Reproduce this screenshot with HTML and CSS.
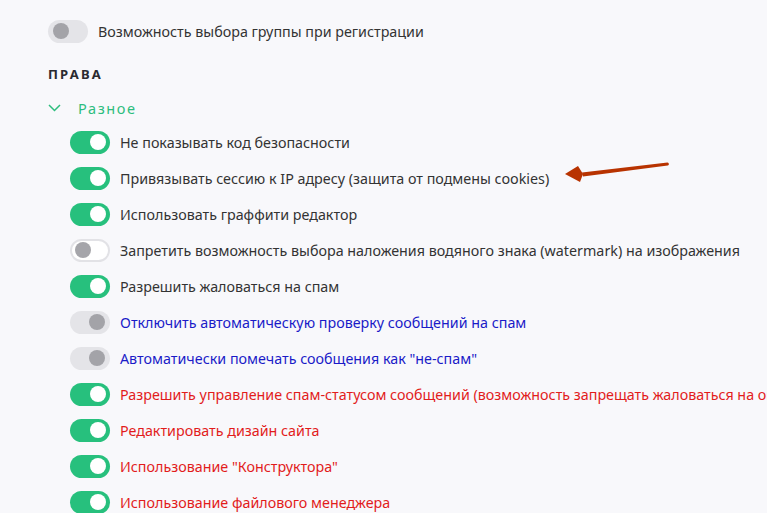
FILE: index.html
```html
<!DOCTYPE html>
<html lang="ru">
<head>
<meta charset="utf-8">
<link rel="stylesheet" href="styles.css">
</head>
<body>
<div class="page">
  <div class="row top">
    <span class="tg disabled-off"><i></i></span>
    <span class="lbl">Возможность выбора группы при регистрации</span>
  </div>
  <div class="section-title">ПРАВА</div>
  <div class="group-head">
    <svg class="chev" width="13" height="8" viewBox="0 0 13 8"><path d="M1 1 L6.5 6.5 L12 1" fill="none" stroke="#2dbd7e" stroke-width="1.5"/></svg>
    <span>Разное</span>
  </div>
  <div class="list">
    <div class="row"><span class="tg on"><i></i></span><span class="lbl">Не показывать код безопасности</span></div>
    <div class="row"><span class="tg on"><i></i></span><span class="lbl">Привязывать сессию к IP адресу (защита от подмены cookies)</span></div>
    <div class="row"><span class="tg on"><i></i></span><span class="lbl">Использовать граффити редактор</span></div>
    <div class="row"><span class="tg off"><i></i></span><span class="lbl">Запретить возможность выбора наложения водяного знака (watermark) на изображения</span></div>
    <div class="row"><span class="tg on"><i></i></span><span class="lbl">Разрешить жаловаться на спам</span></div>
    <div class="row"><span class="tg disabled-on"><i></i></span><span class="lbl blue">Отключить автоматическую проверку сообщений на спам</span></div>
    <div class="row"><span class="tg disabled-on"><i></i></span><span class="lbl blue">Автоматически помечать сообщения как "не-спам"</span></div>
    <div class="row"><span class="tg on"><i></i></span><span class="lbl red">Разрешить управление спам-статусом сообщений (возможность запрещать жаловаться на оп</span></div>
    <div class="row"><span class="tg on"><i></i></span><span class="lbl red">Редактировать дизайн сайта</span></div>
    <div class="row"><span class="tg on"><i></i></span><span class="lbl red">Использование "Конструктора"</span></div>
    <div class="row"><span class="tg on"><i></i></span><span class="lbl red">Использование файлового менеджера</span></div>
  </div>
  <svg class="arrow" width="120" height="30" viewBox="0 0 120 30">
    <path d="M24 15.5 L109.5 5.5 A1.6 1.6 0 0 1 109.8 8.6 L25 19.5 Z" fill="#b83300"/>
    <path d="M7 17 L20 9 L25 17 L22 25 Z" fill="#b83300"/>
  </svg>
</div>
</body>
</html>
```
FILE: styles.css
```css
html, body {
  margin: 0;
  padding: 0;
  background: #f8f8fb;
  overflow: hidden;
}
.page {
  position: relative;
  width: 767px;
  height: 513px;
  padding: 19px 0 0 48px;
  box-sizing: border-box;
  font-family: "Noto Sans", "Open Sans", sans-serif;
  font-size: 14.3px;
  color: #333;
}
.row {
  display: flex;
  align-items: center;
  height: 36px;
  white-space: nowrap;
}
.top {
  height: 24px;
}
.lbl {
  margin-left: 10px;
}
.blue { color: #1b1bc8; }
.red { color: #e21c1c; }
.section-title {
  margin-top: 22px;
  font-weight: 700;
  font-size: 13px;
  letter-spacing: 2.2px;
  color: #2a2a30;
  line-height: 18px;
}
.group-head {
  display: flex;
  align-items: center;
  margin-top: 16px;
  height: 18px;
  color: #2dbd7e;
  letter-spacing: 1.6px;
  font-size: 14.5px;
}
.chev { margin-right: 17px; }
.list {
  margin-top: 7px;
  margin-left: 22px;
}
.tg {
  position: relative;
  display: inline-block;
  width: 40px;
  height: 23px;
  border-radius: 12px;
  box-sizing: border-box;
  flex: none;
}
.tg i {
  position: absolute;
  top: 3.5px;
  width: 16px;
  height: 16px;
  border-radius: 50%;
}
.on { background: #27c07d; }
.on i { right: 4px; background: #fff; }
.off { background: #fff; border: 2px solid #e2e2e6; }
.off i { left: 3px; top: 1.5px; background: #a5a5aa; }
.disabled-off { background: #e4e4e8; }
.disabled-off i { left: 5px; background: #a3a3a8; }
.disabled-on { background: #e4e4e8; }
.disabled-on i { right: 5px; background: #a3a3a8; }
.arrow {
  position: absolute;
  left: 558px;
  top: 157px;
}
```
